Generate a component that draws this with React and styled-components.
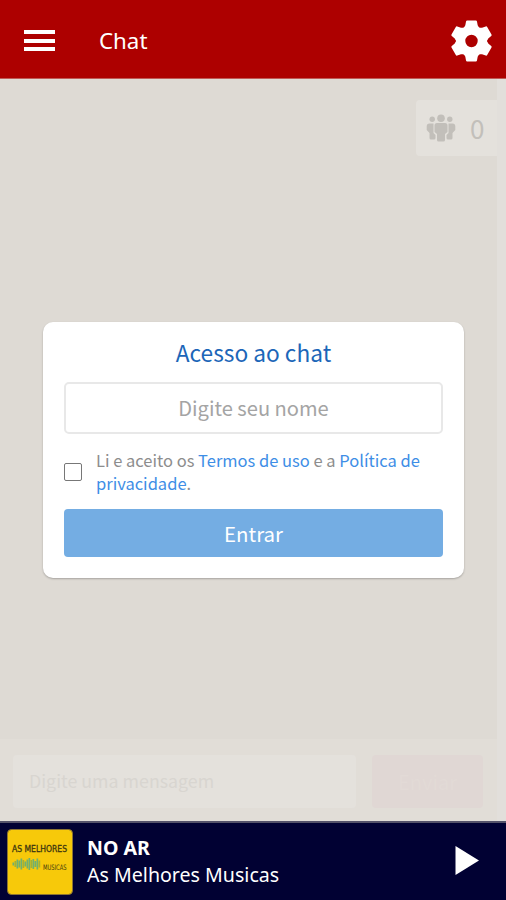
import React, { useState } from 'react';
import styled, { createGlobalStyle } from 'styled-components';

const GlobalStyle = createGlobalStyle`
  * {
    box-sizing: border-box;
  }
  body {
    margin: 0;
    font-family: "Noto Sans", sans-serif;
  }
`;

const chatFont = '"Noto Sans CJK SC", "Noto Sans", sans-serif';

const Screen = styled.div`
  display: flex;
  flex-direction: column;
  height: 900px;
  overflow: hidden;
  background: #dedad4;
`;

const Header = styled.header`
  display: flex;
  align-items: center;
  flex: none;
  height: 79px;
  padding: 3px 13px 0 24px;
  background: #ad0000;
  border-bottom: 1px solid #bf5a56;
  color: #fff;
`;

const MenuButton = styled.button`
  display: flex;
  flex-direction: column;
  gap: 4.5px;
  width: 31px;
  padding: 0;
  border: none;
  background: none;
`;

const MenuLine = styled.span`
  height: 4px;
  background: #fff;
`;

const PageTitle = styled.h1`
  flex: 1;
  margin: 0 0 0 44px;
  font-size: 22.3px;
  font-weight: 400;
  line-height: 30px;
`;

const SettingsIcon = styled.svg`
  width: 43px;
  height: 42px;
`;

const Chat = styled.main`
  display: flex;
  flex-direction: column;
  flex: 1;
  border-right: 9px solid #e2dfdb;
  font-family: ${chatFont};
`;

const Users = styled.div`
  display: flex;
  align-items: center;
  align-self: flex-end;
  gap: 14px;
  width: 81px;
  height: 56px;
  margin-top: 21px;
  padding-left: 10px;
  border-radius: 4px 0 0 4px;
  background: #e4e1dc;
  color: #c2bfba;
  font-size: 26px;
  line-height: 30px;
`;

const Center = styled.div`
  display: flex;
  flex: 1;
  align-items: flex-start;
  padding: 166px 0 0 43px;
`;

const Dialog = styled.form`
  flex: none;
  width: 421px;
  height: 256px;
  padding: 16px 21px 21px;
  border-radius: 10px;
  background: #fff;
  box-shadow: 0 1px 2px rgba(0, 0, 0, 0.25);
`;

const DialogTitle = styled.h2`
  margin: 0 0 14px;
  color: #1c66b8;
  font-size: 22.7px;
  font-weight: 400;
  line-height: 30px;
  text-align: center;
`;

const NameInput = styled.input`
  display: block;
  width: 100%;
  height: 52px;
  padding: 0 12px 1px;
  border: 2px solid #e8e8e8;
  border-radius: 5px;
  background: #fff;
  font-family: ${chatFont};
  font-size: 20.1px;
  text-align: center;
  outline: none;
  &::placeholder {
    color: #a4a4a4;
  }
`;

const Terms = styled.label`
  display: flex;
  align-items: center;
  gap: 14px;
  height: 46px;
  margin: 15px 0 14px;
  color: #8d8d8d;
  font-size: 16.5px;
  line-height: 23px;
`;

const TermsText = styled.span`
  margin-bottom: 1px;
`;

const Checkbox = styled.input`
  appearance: none;
  flex: none;
  width: 18px;
  height: 18px;
  margin: 0;
  border: 1.5px solid #777;
  border-radius: 2px;
  background: #fff;
`;

const Link = styled.a`
  color: #3e8ee6;
`;

const EnterButton = styled.button`
  display: block;
  width: 100%;
  height: 48px;
  padding: 0;
  border: none;
  border-radius: 4px;
  background: #74ade3;
  color: #fff;
  font-family: ${chatFont};
  font-size: 20.4px;
  line-height: 30px;
`;

const Composer = styled.div`
  display: flex;
  align-items: flex-start;
  gap: 16px;
  height: 82px;
  padding: 16px 13px 0;
  background: #e1ddd7;
`;

const Message = styled.div`
  width: 343px;
  height: 53px;
  padding-left: 16px;
  border-radius: 4px;
  background: #e4e1dc;
  color: #d8d5d0;
  font-size: 17.8px;
  line-height: 51px;
`;

const SendButton = styled.div`
  width: 111px;
  height: 53px;
  border-radius: 4px;
  background: #e0d7d4;
  color: #e2dad6;
  font-size: 20px;
  line-height: 53px;
  text-align: center;
`;

const Player = styled.footer`
  display: flex;
  align-items: center;
  flex: none;
  height: 79px;
  padding: 0 27px 0 7px;
  border-top: 2px solid #55536a;
  background: #010133;
  color: #fff;
`;

const Cover = styled.svg`
  flex: none;
  width: 66px;
  height: 66px;
`;

const Track = styled.div`
  flex: 1;
  margin: 0 0 2px 14px;
  font-size: 19.6px;
  line-height: 27px;
`;

const Station = styled.div`
  font-weight: 700;
`;

const PlayIcon = styled.svg`
  width: 24px;
  height: 29px;
  margin-bottom: 3px;
`;

const GearIcon = () => (
  <SettingsIcon viewBox="-21.5 -21 43 42" fill="#fff" stroke="#fff" strokeLinejoin="round">
    <circle r="10.800" fill="none" strokeWidth="9.200" />
    {[0, 60, 120, 180, 240, 300].map((angle) => (
      <path
        key={angle}
        transform={`rotate(${angle})`}
        strokeWidth="2.400"
        d="M-7 -12L-5 -15.500L-4.300 -19.400H4.300L5 -15.500L7 -12z"
      />
    ))}
  </SettingsIcon>
);

const PeopleIcon = () => (
  <svg width="30" height="28" viewBox="0 0 30 28" fill="currentColor">
    <circle cx="15" cy="4.2" r="3.8" />
    <circle cx="6.2" cy="5.2" r="2.7" />
    <circle cx="23.8" cy="5.2" r="2.7" />
    <path d="M11 9h8q2.500 0 2.500 2.500v6.500l-2.500 2v6q0 1.500-1.500 1.500h-5q-1.500 0-1.500-1.500v-6l-2.500-2v-6.500q0-2.500 2.500-2.500z" />
    <path d="M3.500 9.500h4v9.500l2 2v3q0 1.500-1.500 1.500h-3q-1.500 0-1.500-1.500v-5l-2.800-3v-3.500q0-3 2.800-3z" />
    <path d="M26.500 9.500h-4v9.500l-2 2v3q0 1.500 1.500 1.500h3q1.500 0 1.500-1.500v-5l2.800-3v-3.500q0-3-2.800-3z" />
  </svg>
);

// heights of the bars in the cover's wave form
const wave = [3, 6, 9, 7, 11, 8, 5, 9, 12, 8, 10, 6, 11, 7];

const CoverArt = () => (
  <Cover viewBox="0 0 66 66">
    <rect x="0.500" y="0.500" width="65" height="65" rx="4" fill="#f7c90a" stroke="#8c7431" />
    <text x="5" y="22.500" fontFamily="DejaVu Sans" fontSize="8.500" textLength="55" lengthAdjust="spacingAndGlyphs" fill="#40370f" stroke="#40370f" strokeWidth="0.300">
      AS MELHORES
    </text>
    {wave.map((h, i) => (
      <rect key={i} x={5.5 + i * 2} y={35 - h / 2} width="1.700" height={h} fill={i % 4 === 1 ? '#a0b038' : '#6fb070'} />
    ))}
    <text x="36" y="40.500" fontFamily="DejaVu Sans" fontSize="7.500" textLength="23.500" lengthAdjust="spacingAndGlyphs" fill="#40370f">
      MUSICAS
    </text>
  </Cover>
);

const App = () => {
  const [name, setName] = useState('');
  const [accepted, setAccepted] = useState(false);

  return (
    <Screen>
      <GlobalStyle />
      <Header>
        <MenuButton>
          <MenuLine />
          <MenuLine />
          <MenuLine />
        </MenuButton>
        <PageTitle>Chat</PageTitle>
        <GearIcon />
      </Header>

      <Chat>
        <Users>
          <PeopleIcon />
          <span>0</span>
        </Users>
        <Center>
          <Dialog onSubmit={(e) => e.preventDefault()}>
            <DialogTitle>Acesso ao chat</DialogTitle>
            <NameInput
              placeholder="Digite seu nome"
              value={name}
              onChange={(e) => setName(e.target.value)}
            />
            <Terms>
              <Checkbox
                type="checkbox"
                checked={accepted}
                onChange={(e) => setAccepted(e.target.checked)}
              />
              <TermsText>
                Li e aceito os <Link>Termos de uso</Link> e a <Link>Política de privacidade</Link>.
              </TermsText>
            </Terms>
            <EnterButton>Entrar</EnterButton>
          </Dialog>
        </Center>
        <Composer>
          <Message>Digite uma mensagem</Message>
          <SendButton>Enviar</SendButton>
        </Composer>
      </Chat>

      <Player>
        <CoverArt />
        <Track>
          <Station>NO AR</Station>
          <div>As Melhores Musicas</div>
        </Track>
        <PlayIcon viewBox="0 0 24 29">
          <path d="M0.500 0L24 14.500L0.500 29z" fill="#fff" />
        </PlayIcon>
      </Player>
    </Screen>
  );
};

export default App;
